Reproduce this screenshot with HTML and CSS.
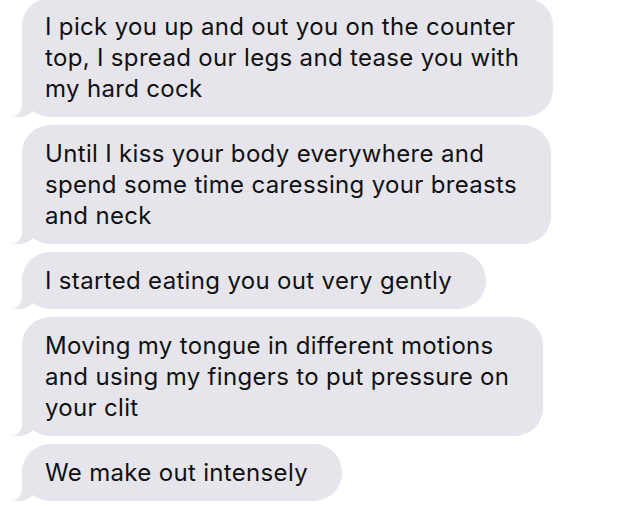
FILE: index.html
```html
<!DOCTYPE html>
<html>
<head>
<meta charset="utf-8">
<link rel="stylesheet" href="styles.css">
</head>
<body>
<div class="thread">
  <div class="bubble">I pick you up and out you on the counter<br>top, I spread our legs and tease you with<br>my hard cock</div>
  <div class="bubble">Until I kiss your body everywhere and<br>spend some time caressing your breasts<br>and neck</div>
  <div class="bubble">I started eating you out very gently</div>
  <div class="bubble">Moving my tongue in different motions<br>and using my fingers to put pressure on<br>your clit</div>
  <div class="bubble">We make out intensely</div>
</div>
</body>
</html>
```
FILE: styles.css
```css
html, body {
  margin: 0;
  padding: 0;
  background: #ffffff;
}
.thread {
  display: flex;
  flex-direction: column;
  align-items: flex-start;
  gap: 8px;
  margin-top: -2px;
  padding-left: 22px;
}
.bubble {
  position: relative;
  background: #e6e5eb;
  color: #111111;
  font-family: Inter, "Liberation Sans", Arial, sans-serif;
  font-size: 24px;
  line-height: 31px;
  letter-spacing: 0.33px;
  padding: 13px 34px 13px 23px;
  border-radius: 28px;
}
.bubble::before {
  content: "";
  position: absolute;
  left: -11px;
  bottom: 0;
  width: 26px;
  height: 24px;
  background: #e6e5eb;
  border-bottom-right-radius: 18px 16px;
}
.bubble::after {
  content: "";
  position: absolute;
  left: -30px;
  bottom: 0;
  width: 30px;
  height: 24px;
  background: #ffffff;
  border-bottom-right-radius: 12px;
}
```
